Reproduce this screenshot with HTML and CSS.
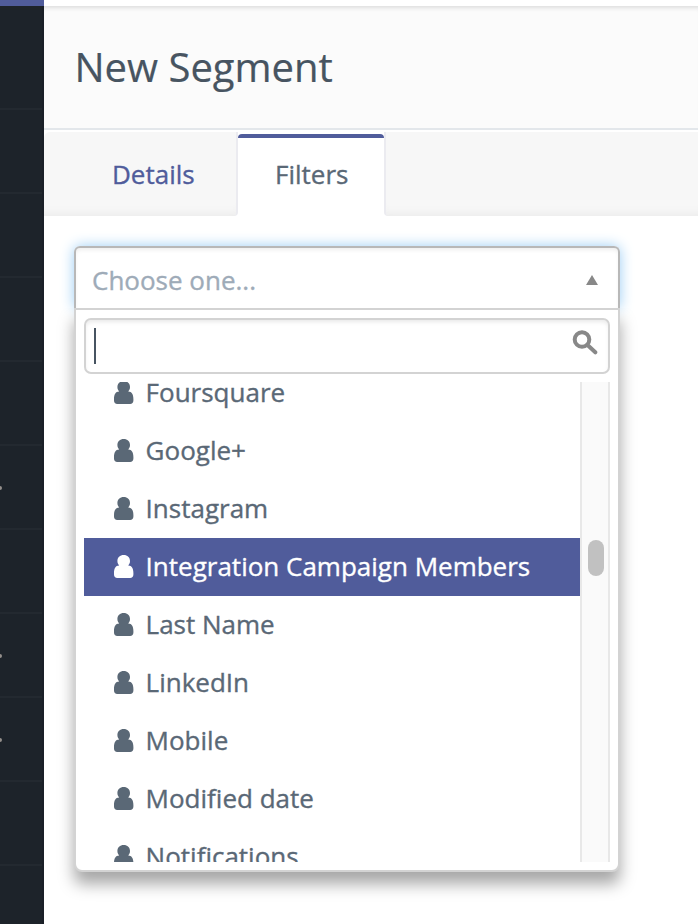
FILE: index.html
```html
<!DOCTYPE html>
<html lang="en">
<head>
<meta charset="utf-8">
<title>New Segment</title>
<link rel="stylesheet" href="styles.css">
</head>
<body>
<svg class="defs" width="0" height="0">
  <symbol id="user" viewBox="0 0 20 23"><path d="M9.700 0C13.500 0 16 2.600 16 5.900C16 7.900 15.300 9.300 14.200 10.400C18 10.400 19.400 13.800 19.400 18V19.500C19.400 21.700 18.100 22.900 16.100 22.900H3.300C1.300 22.900 0 21.700 0 19.500V18C0 13.800 1.400 10.400 5.200 10.400C4.100 9.300 3.400 7.900 3.400 5.900C3.400 2.600 5.900 0 9.700 0Z"/></symbol>
</svg>
<div class="app">
  <aside class="sidebar">
    <div class="brand"></div>
    <ul class="nav">
      <li></li><li></li><li></li><li></li><li></li>
      <li class="dot"></li><li></li><li class="dot"></li><li class="dot"></li><li></li><li></li>
    </ul>
  </aside>
  <main class="main">
    <div class="topbar"></div>
    <header class="header"><h1>New Segment</h1></header>
    <nav class="tabs">
      <a class="tab">Details</a>
      <a class="tab active">Filters</a>
      <span class="rest"></span>
    </nav>
    <section class="chosen">
      <div class="single"><span>Choose one...</span><svg width="12" height="10"><path d="M6 0L12 10H0Z"/></svg></div>
      <div class="drop">
        <div class="search"><i class="caret"></i><svg width="26" height="26" viewBox="0 0 26 26"><circle cx="10" cy="9.500" r="7.300"/><path d="M15.500 15L23.300 22.300"/></svg></div>
        <div class="results">
          <ul class="list">
            <li><svg><use href="#user"/></svg><span>Foursquare</span></li>
            <li><svg><use href="#user"/></svg><span>Google+</span></li>
            <li><svg><use href="#user"/></svg><span>Instagram</span></li>
            <li class="on"><svg><use href="#user"/></svg><span>Integration Campaign Members</span></li>
            <li><svg><use href="#user"/></svg><span>Last Name</span></li>
            <li><svg><use href="#user"/></svg><span>LinkedIn</span></li>
            <li><svg><use href="#user"/></svg><span>Mobile</span></li>
            <li><svg><use href="#user"/></svg><span>Modified date</span></li>
            <li><svg><use href="#user"/></svg><span>Notifications</span></li>
          </ul>
          <div class="track"><div class="thumb"></div></div>
        </div>
      </div>
    </section>
  </main>
</div>
</body>
</html>
```
FILE: styles.css
```css
* { box-sizing: border-box; }
body { margin: 0; font-family: "Open Sans", sans-serif; font-size: 26px; color: #5a6876; background: #fff; -webkit-text-stroke: .35px currentColor; }
ul { list-style: none; margin: 0; padding: 0; }
.defs { display: block; }
.app { display: flex; height: 924px; overflow: hidden; }
.sidebar { width: 44px; flex: none; background: #1d232a; }
.brand { height: 6px; background: #505c9b; }
.nav { border-right: 2px solid #1a1f27; height: 918px; padding-top: 20px; overflow: hidden; }
.nav li { height: 84px; border-bottom: 2px solid #232930; display: flex; align-items: center; }
.nav li.dot::before { content: ""; width: 2px; height: 4px; background: #948f8c; margin-top: 2px; border-radius: 0 2px 2px 0; }
.main { flex: 1; min-width: 0; }
.topbar { height: 6px; background: #fff; }
.header { height: 124px; padding: 0 30.5px; background: #fbfbfb; border-bottom: 2px solid #e3e7eb; box-shadow: inset 0 5px 4px -3px #ddd; }
h1 { margin: 0; font-size: 40px; line-height: 122px; font-weight: 400; color: #475461; white-space: nowrap; -webkit-text-stroke-width: .2px; }
.tabs { display: flex; height: 86px; padding-top: 2px; }
.tab, .rest { background: #f7f7f7; box-shadow: inset 0 -10px 10px -8px #eaeaea; }
.tab { width: 194px; line-height: 84px; padding-left: 68px; color: #505c9b; border-radius: 6px 0 4px 0; border-right: 2px solid #ebebf0; }
.tab.active { width: 146px; margin-top: 2px; height: 82px; line-height: 72px; padding-left: 37px; color: #5a6876; background: #fff; border-right: 0; border-top: 4px solid #505c9b; border-radius: 4px 4px 0 0; box-shadow: none; }
.rest { flex: 1; border-left: 2px solid #ebebf0; border-radius: 0 0 0 4px; }
.chosen { width: 546px; margin: 30px 0 0 30px; }
.single { height: 62px; padding: 0 20px 0 16px; display: flex; align-items: center; justify-content: space-between; color: #9eabb8; border: 2px solid #b8b8b8; border-bottom: 0; border-radius: 6px 6px 0 0; box-shadow: 0 0 14px #9bcdf4, inset 0 3px 4px -1px #eee; }
.single span { padding-top: 3px; }
.single svg { margin-top: 4px; fill: #888; }
.drop { position: relative; height: 564px; padding: 8px; background: #fff; border: 2px solid #d3d3d3; border-radius: 0 0 8px 8px; box-shadow: 0 12px 16px rgba(0,0,0,.35); clip-path: inset(0 -30px -40px -30px); }
.search { height: 56px; border: 2px solid #d3d3d3; border-radius: 7px; padding: 8px 10px 8px 8px; display: flex; justify-content: space-between; box-shadow: inset 0 3px 4px -1px #e9e9e9; }
.caret { width: 2px; height: 36px; background: #475461; }
.search svg { margin-top: 2px; fill: none; stroke: #888; stroke-width: 4; stroke-linecap: round; }
.results { display: flex; height: 480px; margin-top: 8px; overflow: hidden; }
.list { width: 496px; margin-top: -18px; flex: none; }
.list li { height: 58px; display: flex; align-items: center; padding-left: 29.600px; fill: #5a6876; white-space: nowrap; }
.list svg { width: 20px; height: 23px; margin-right: 12px; margin-top: -1px; }
.list span { padding-bottom: 2px; }
.list .on { color: #fff; fill: #fff; background: #505c9b; }
.track { width: 30px; height: 480px; padding: 158px 4px 0 6px; background: #fafafa; border: solid #e8e8e8; border-width: 0 2px; }
.thumb { width: 16px; height: 36px; border-radius: 8px; background: #c1c1c1; }
```
